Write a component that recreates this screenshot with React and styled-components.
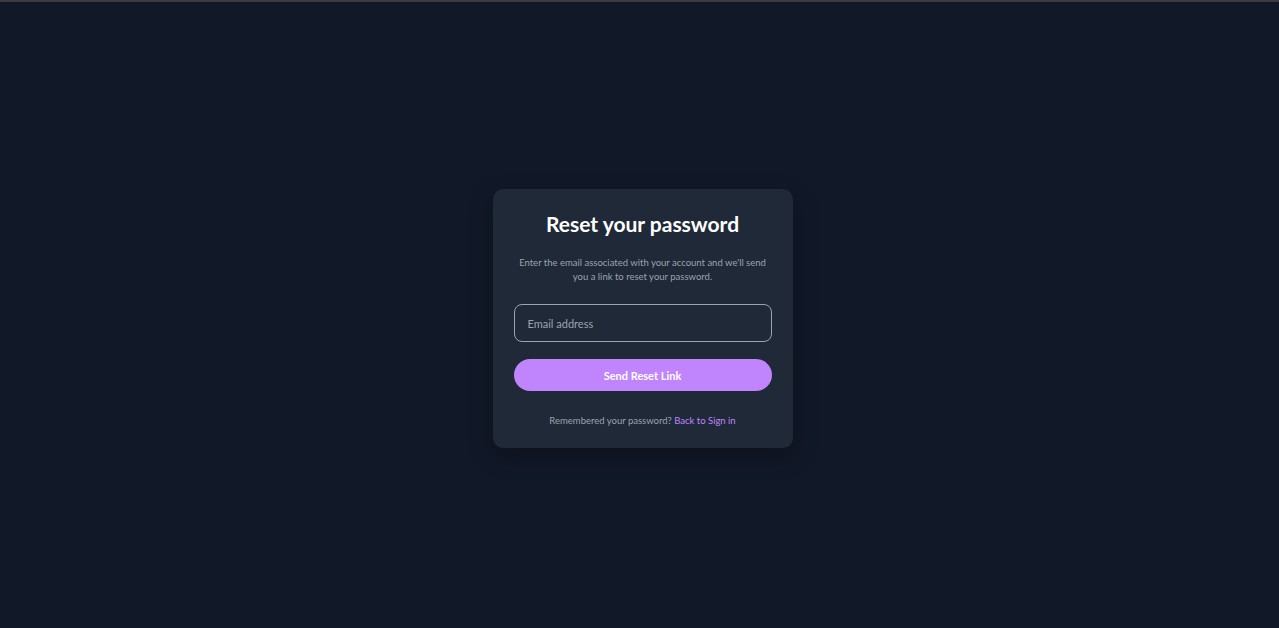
import React from 'react'
import styled, { createGlobalStyle } from 'styled-components'

const GlobalStyle = createGlobalStyle`
  * { box-sizing: border-box; }
  html, body { margin: 0; padding: 0; background: #111827; }
  body { font-family: Lato, "Open Sans", sans-serif; }
`;

const Page = styled.div`
  min-height: 100vh;
  display: flex;
  flex-direction: column;
  background: #111827;
`;

const TopBar = styled.div`
  height: 2px;
  background: #3b3b3d;
`;

const Main = styled.main`
  flex: 1;
  display: flex;
  align-items: center;
  justify-content: center;
  padding: 7px 0 0 6px;
`;

const Card = styled.div`
  width: 300px;
  background: #1f2937;
  border-radius: 10px;
  padding: 21px 21px 20px;
  display: flex;
  flex-direction: column;
  align-items: center;
  box-shadow: 0 8px 24px rgba(0, 0, 0, 0.25);
`;

const Title = styled.h1`
  margin: 0;
  font-size: 21px;
  font-weight: 700;
  color: #ffffff;
  line-height: 28px;
`;

const Description = styled.p`
  margin: 18px 0 0;
  font-size: 9.5px;
  line-height: 13.5px;
  color: #9ca3af;
  text-align: center;
`;

const Input = styled.input`
  margin-top: 21px;
  width: 100%;
  height: 38px;
  border-radius: 8px;
  border: 1px solid #9ca3af;
  background: transparent;
  padding: 0 13px;
  font-family: inherit;
  font-size: 11px;
  color: #e5e7eb;
  outline: none;
  &::placeholder { color: #9ca3af; }
`;

const Button = styled.button`
  margin-top: 17px;
  width: 100%;
  height: 32px;
  border: none;
  border-radius: 999px;
  background: #c084fc;
  color: #ffffff;
  font-family: inherit;
  font-size: 11px;
  font-weight: 700;
  cursor: pointer;
`;

const Footer = styled.p`
  margin: 23px 0 0;
  font-size: 9.5px;
  color: #9ca3af;
  line-height: 14px;
`;

const Link = styled.a`
  color: #c084fc;
  text-decoration: none;
`;

export default function App() {
  return (
    <>
      <GlobalStyle />
      <Page>
        <TopBar />
        <Main>
          <Card>
            <Title>Reset your password</Title>
            <Description>
              Enter the email associated with your account and we'll send you a link to reset your password.
            </Description>
            <Input type="email" placeholder="Email address" />
            <Button>Send Reset Link</Button>
            <Footer>
              Remembered your password? <Link href="#">Back to Sign in</Link>
            </Footer>
          </Card>
        </Main>
      </Page>
    </>
  )
}
